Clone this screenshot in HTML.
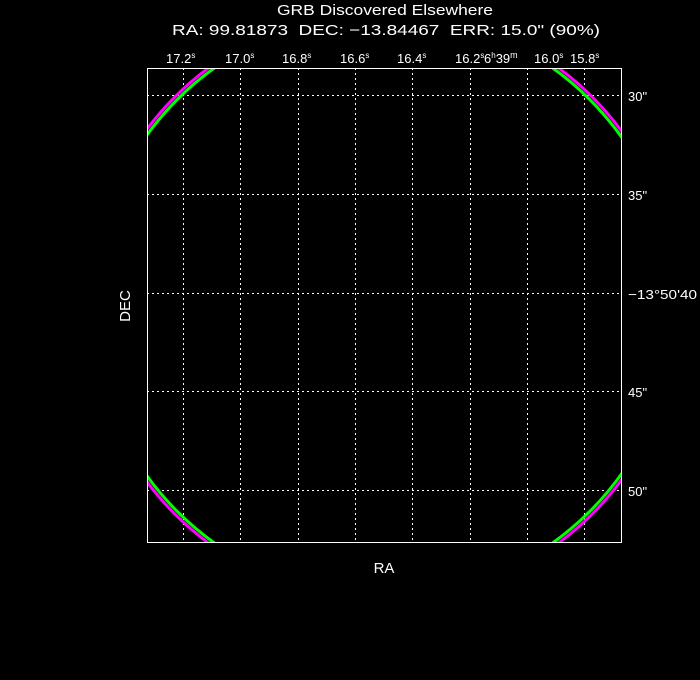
<!DOCTYPE html><html><head><style>body{margin:0;background:#000}svg{display:block}text{font-family:"Liberation Sans",sans-serif;fill:#fff;white-space:pre}</style></head><body>
<svg width="700" height="680" xmlns="http://www.w3.org/2000/svg">
<text x="277" y="15" font-size="15" textLength="216" lengthAdjust="spacingAndGlyphs">GRB Discovered Elsewhere</text>
<text x="172" y="35" font-size="15" textLength="428" lengthAdjust="spacingAndGlyphs">RA: 99.81873  DEC: −13.84467  ERR: 15.0" (90%)</text>
<defs><clipPath id="c"><rect x="147" y="68" width="475" height="475"/></clipPath></defs>
<g stroke="#fff" stroke-width="1" stroke-dasharray="2,3" fill="none">
<path d="M183.5 68V543M240.5 68V543M298.5 68V543M355.5 68V543M412.5 68V543M470.5 68V543M527.5 68V543M584.5 68V543"/>
<path d="M147 95.5H622M147 194.5H622M147 293.5H622M147 391.5H622M147 490.5H622"/>
</g>
<g clip-path="url(#c)" fill="none" stroke-width="3">
<circle cx="383.5" cy="305.5" r="295" stroke="#f0f"/>
<circle cx="383.5" cy="305.5" r="291.5" stroke="#0f0"/>
</g>
<rect x="147.5" y="68.5" width="474" height="474" fill="none" stroke="#fff"/>
<g font-size="13">
<text x="166" y="63">17.2<tspan font-size="8" dy="-5">s</tspan></text>
<text x="225" y="63">17.0<tspan font-size="8" dy="-5">s</tspan></text>
<text x="282" y="63">16.8<tspan font-size="8" dy="-5">s</tspan></text>
<text x="340" y="63">16.6<tspan font-size="8" dy="-5">s</tspan></text>
<text x="397" y="63">16.4<tspan font-size="8" dy="-5">s</tspan></text>
<text x="455" y="63">16.2<tspan font-size="8" dy="-5">s</tspan></text>
<text x="484" y="63">6<tspan font-size="8" dy="-5">h</tspan><tspan dy="5">39</tspan><tspan font-size="9" dy="-5">m</tspan></text>
<text x="534" y="63">16.0<tspan font-size="8" dy="-5">s</tspan></text>
<text x="570" y="63">15.8<tspan font-size="8" dy="-5">s</tspan></text>
<text x="628" y="101">30"</text>
<text x="628" y="200">35"</text>
<text x="628" y="299" textLength="69" lengthAdjust="spacingAndGlyphs">−13°50'40</text>
<text x="628" y="397">45"</text>
<text x="628" y="496">50"</text>
<text x="384" y="573" font-size="15" text-anchor="middle">RA</text>
<text x="130" y="306" font-size="15" text-anchor="middle" transform="rotate(-90 130 306)">DEC</text>
</g>
</svg></body></html>
